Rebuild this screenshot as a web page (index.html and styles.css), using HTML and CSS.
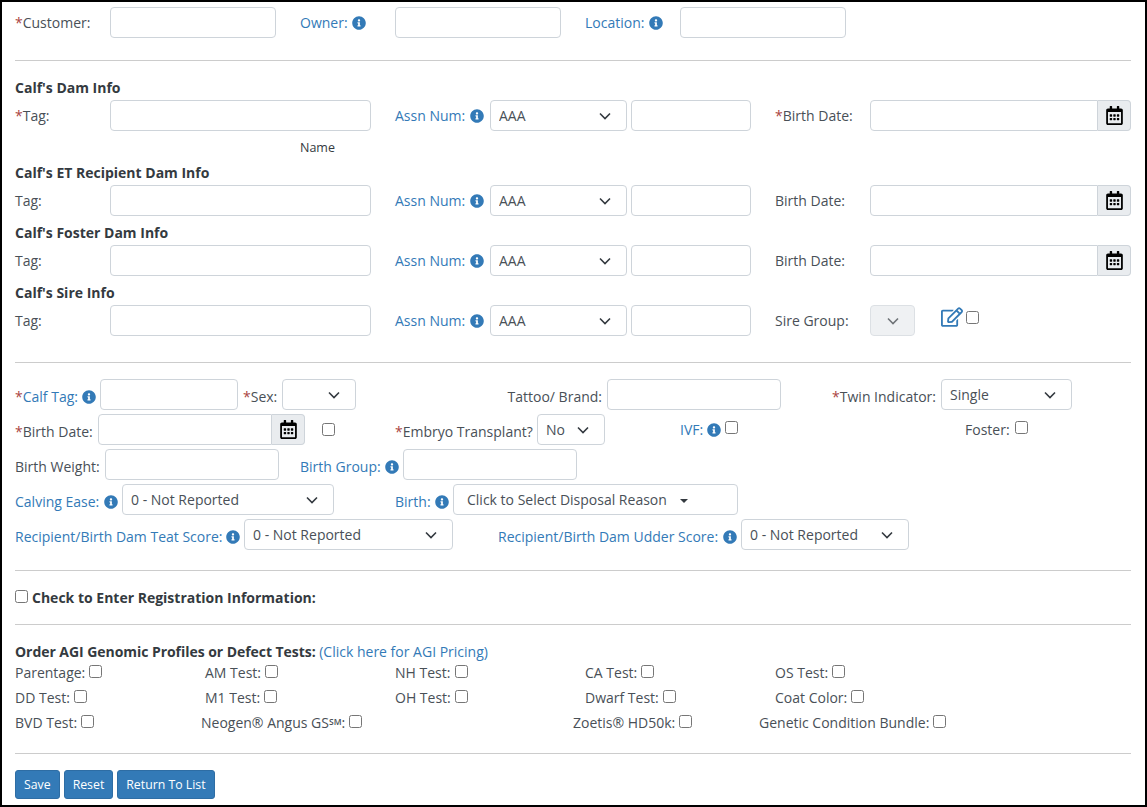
FILE: index.html

```html
<!DOCTYPE html>
<html lang="en">
<head>
    <meta charset="UTF-8">
    <title>Calf Registration</title>
    <link rel="stylesheet" href="styles.css">
</head>
<body>
    <svg class="sprites" xmlns="http://www.w3.org/2000/svg">
        <symbol id="info" viewBox="0 0 512 512"><path d="M256 8C119.043 8 8 119.083 8 256c0 136.997 111.043 248 248 248s248-111.003 248-248C504 119.083 392.957 8 256 8zm0 110c23.196 0 42 18.804 42 42s-18.804 42-42 42-42-18.804-42-42 18.804-42 42-42zm56 254c0 6.627-5.373 12-12 12h-88c-6.627 0-12-5.373-12-12v-24c0-6.627 5.373-12 12-12h12v-64h-12c-6.627 0-12-5.373-12-12v-24c0-6.627 5.373-12 12-12h64c6.627 0 12 5.373 12 12v100h12c6.627 0 12 5.373 12 12v24z"/></symbol>
        <symbol id="cal" viewBox="0 0 448 512"><path d="M148 288h-40c-6.6 0-12-5.4-12-12v-40c0-6.6 5.4-12 12-12h40c6.6 0 12 5.4 12 12v40c0 6.6-5.4 12-12 12zm108-12v-40c0-6.6-5.4-12-12-12h-40c-6.6 0-12 5.4-12 12v40c0 6.6 5.4 12 12 12h40c6.6 0 12-5.4 12-12zm96 0v-40c0-6.6-5.4-12-12-12h-40c-6.6 0-12 5.4-12 12v40c0 6.6 5.4 12 12 12h40c6.6 0 12-5.4 12-12zm-96 96v-40c0-6.6-5.4-12-12-12h-40c-6.6 0-12 5.4-12 12v40c0 6.6 5.4 12 12 12h40c6.6 0 12-5.4 12-12zm-96 0v-40c0-6.6-5.4-12-12-12h-40c-6.6 0-12 5.4-12 12v40c0 6.6 5.4 12 12 12h40c6.6 0 12-5.4 12-12zm192 0v-40c0-6.6-5.4-12-12-12h-40c-6.6 0-12 5.4-12 12v40c0 6.6 5.4 12 12 12h40c6.6 0 12-5.4 12-12zm96-260v352c0 26.5-21.5 48-48 48H48c-26.5 0-48-21.5-48-48V112c0-26.5 21.5-48 48-48h48V12c0-6.6 5.4-12 12-12h40c6.6 0 12 5.4 12 12v52h128V12c0-6.6 5.4-12 12-12h40c6.6 0 12 5.4 12 12v52h48c26.5 0 48 21.5 48 48zm-48 346V160H48v298c0 3.3 2.7 6 6 6h340c3.3 0 6-2.7 6-6z"/></symbol>
        <symbol id="edit" viewBox="0 0 576 512"><path d="M402.3 344.9l32-32c5-5 13.7-1.5 13.7 5.7V464c0 26.5-21.5 48-48 48H48c-26.5 0-48-21.5-48-48V112c0-26.5 21.5-48 48-48h273.5c7.1 0 10.7 8.6 5.7 13.7l-32 32c-1.5 1.5-3.5 2.3-5.7 2.3H48v352h352V350.5c0-2.1.8-4.1 2.3-5.6zm156.6-201.8L296.3 405.7l-90.4 10c-26.2 2.9-48.5-19.2-45.6-45.6l10-90.4L432.9 17.1c22.9-22.9 59.9-22.9 82.7 0l43.2 43.2c22.9 22.9 22.9 60 .1 82.8zM460.1 174L402 115.9 216.2 301.8l-7.3 65.3 65.3-7.3L460.1 174zm64.8-79.7l-43.2-43.2c-4.1-4.1-10.8-4.1-14.8 0L436 82l58.1 58.1 30.9-30.9c4-4.2 4-10.8-.1-14.9z"/></symbol>
    </svg>

    <form class="frame">
        <div class="row row-owner">
            <label><span class="req">*</span>Customer:</label>
            <input type="text">
            <label class="pad-l link">Owner: <svg class="info"><use href="#info"/></svg></label>
            <input type="text">
            <label class="pad-l link">Location: <svg class="info"><use href="#info"/></svg></label>
            <input type="text">
        </div>
        <hr class="hr-owner">

        <h4 class="dam-title first">Calf's Dam Info</h4>
        <div class="row row-dam">
            <label><span class="req">*</span>Tag:</label>
            <input type="text">
            <label class="pad-l link">Assn Num: <svg class="info"><use href="#info"/></svg></label>
            <select><option>AAA</option></select>
            <input class="gap-l" type="text">
            <label class="pad-l"><span class="req">*</span>Birth Date:</label>
            <div class="date"><input type="text"><span class="addon"><svg class="cal"><use href="#cal"/></svg></span></div>
        </div>
        <div class="name-note">Name</div>

        <h4 class="dam-title">Calf's ET Recipient Dam Info</h4>
        <div class="row row-dam">
            <label>Tag:</label>
            <input type="text">
            <label class="pad-l link">Assn Num: <svg class="info"><use href="#info"/></svg></label>
            <select><option>AAA</option></select>
            <input class="gap-l" type="text">
            <label class="pad-l">Birth Date:</label>
            <div class="date"><input type="text"><span class="addon"><svg class="cal"><use href="#cal"/></svg></span></div>
        </div>

        <h4 class="dam-title">Calf's Foster Dam Info</h4>
        <div class="row row-dam">
            <label>Tag:</label>
            <input type="text">
            <label class="pad-l link">Assn Num: <svg class="info"><use href="#info"/></svg></label>
            <select><option>AAA</option></select>
            <input class="gap-l" type="text">
            <label class="pad-l">Birth Date:</label>
            <div class="date"><input type="text"><span class="addon"><svg class="cal"><use href="#cal"/></svg></span></div>
        </div>

        <h4 class="dam-title">Calf's Sire Info</h4>
        <div class="row row-sire">
            <label>Tag:</label>
            <input type="text">
            <label class="pad-l link">Assn Num: <svg class="info"><use href="#info"/></svg></label>
            <select><option>AAA</option></select>
            <input class="gap-l" type="text">
            <label class="pad-l">Sire Group:</label>
            <select class="locked" disabled></select>
            <div class="sire-tools"><svg class="edit"><use href="#edit"/></svg><input type="checkbox"></div>
        </div>
        <hr class="hr-sire">

        <div class="calf-rows">
            <div class="row row-calf">
                <label class="link"><span class="req">*</span>Calf Tag: <svg class="info tight"><use href="#info"/></svg></label>
                <input type="text">
                <label class="pad-sex"><span class="req">*</span>Sex:</label>
                <select></select>
                <label class="to-right">Tattoo/ Brand:</label>
                <input type="text">
                <label class="to-right"><span class="req">*</span>Twin Indicator:</label>
                <select><option>Single</option></select>
            </div>
            <div class="row row-birth">
                <label><span class="req">*</span>Birth Date:</label>
                <div class="date"><input type="text"><span class="addon"><svg class="cal"><use href="#cal"/></svg></span></div>
                <div class="birth-check"><input type="checkbox"></div>
                <label><span class="req">*</span>Embryo Transplant?</label>
                <select><option>No</option></select>
                <span></span>
                <label class="link no-drop">IVF: <svg class="info tight"><use href="#info"/></svg> <input type="checkbox"></label>
                <label class="no-drop foster">Foster: <input type="checkbox"></label>
            </div>
            <div class="row row-weight">
                <label>Birth Weight:</label>
                <input type="text">
                <label class="pad-l link">Birth Group: <svg class="info"><use href="#info"/></svg></label>
                <input type="text">
            </div>
            <div class="row row-ease">
                <label class="link">Calving Ease: <svg class="info"><use href="#info"/></svg></label>
                <select><option>0 - Not Reported</option></select>
                <label class="pad-birth link">Birth: <svg class="info"><use href="#info"/></svg></label>
                <button class="disposal" type="button">Click to Select Disposal Reason<span class="caret"></span></button>
            </div>
            <div class="row row-score">
                <label class="link">Recipient/Birth Dam Teat Score: <svg class="info tight"><use href="#info"/></svg></label>
                <select><option>0 - Not Reported</option></select>
                <label class="pad-udder link">Recipient/Birth Dam Udder Score: <svg class="info"><use href="#info"/></svg></label>
                <select><option>0 - Not Reported</option></select>
            </div>
        </div>
        <hr class="hr-score">

        <label class="reg-check"><input type="checkbox">Check to Enter Registration Information:</label>
        <hr class="hr-reg">

        <div class="agi-title"><b>Order AGI Genomic Profiles or Defect Tests:</b> <a href="#">(Click here for AGI Pricing)</a></div>
        <div class="tests">
            <label>Parentage: <input type="checkbox"></label>
            <label>AM Test: <input type="checkbox"></label>
            <label>NH Test: <input type="checkbox"></label>
            <label>CA Test: <input type="checkbox"></label>
            <label>OS Test: <input type="checkbox"></label>
            <label>DD Test: <input type="checkbox"></label>
            <label>M1 Test: <input type="checkbox"></label>
            <label>OH Test: <input type="checkbox"></label>
            <label>Dwarf Test: <input type="checkbox"></label>
            <label>Coat Color: <input type="checkbox"></label>
            <label>BVD Test: <input type="checkbox"></label>
            <label class="neogen">Neogen® Angus GS<sup>SM</sup>: <input type="checkbox"></label>
            <span></span>
            <label class="zoetis">Zoetis® HD50k: <input type="checkbox"></label>
            <label class="bundle">Genetic Condition Bundle: <input type="checkbox"></label>
        </div>
        <hr class="hr-tests">

        <div class="actions">
            <button type="button">Save</button>
            <button type="button">Reset</button>
            <button type="button">Return To List</button>
        </div>
    </form>
</body>
</html>
```

FILE: styles.css

```css
* {
    box-sizing: border-box;
}
html, body {
    margin: 0;
    padding: 0;
}
body {
    font-family: "Open Sans", sans-serif;
    font-size: 14px;
    color: #495057;
    background-color: #fff;
}
.sprites {
    display: none;
}
.frame {
    width: 1147px;
    height: 807px;
    border: 2px solid #000;
    padding: 5px 14px 0 13px;
    overflow: hidden;
}
hr {
    border: none;
    border-top: 1px solid #ccc;
    margin: 0;
}
.row {
    display: grid;
    align-items: center;
    height: 31px;
}
.row label {
    white-space: nowrap;
}
input[type="text"], select {
    height: 31px;
    width: 100%;
    border: 1px solid #ced4da;
    border-radius: 4px;
    background-color: #fff;
    font-family: inherit;
    font-size: 14px;
    color: #495057;
    padding: 0 8px;
}
select {
    appearance: none;
    background-image: url("data:image/svg+xml,%3Csvg xmlns='http://www.w3.org/2000/svg' width='12' height='8' viewBox='0 0 12 8'%3E%3Cpath fill='none' stroke='%23343a40' stroke-width='1.6' d='M1 1.5l5 5 5-5'/%3E%3C/svg%3E");
    background-repeat: no-repeat;
    background-position: right 15px center;
}
input[type="checkbox"] {
    width: 13px;
    height: 13px;
    margin: 0 0 0 1px;
    vertical-align: 1px;
}
.req {
    color: #a94442;
}
.link {
    color: #337ab7;
}
.info {
    width: 14px;
    height: 14px;
    fill: #337ab7;
    vertical-align: -2px;
    margin-left: 1px;
}
.info.tight {
    margin-left: 0;
}
.pad-l {
    padding-left: 24px;
}

/* top rows */
.row-owner {
    grid-template-columns: 95px 166px 119px 166px 119px 166px;
}
.hr-owner {
    margin-top: 22px;
}
.dam-title {
    font-size: 14px;
    font-weight: 700;
    color: #343a40;
    height: 23px;
    line-height: 22px;
    margin: 6px 0 0;
}
.dam-title.first {
    margin-top: 16px;
}
.row-dam {
    grid-template-columns: 95px 261px 119px 137px 124px 119px 261px;
}
.row-sire {
    grid-template-columns: 95px 261px 119px 137px 124px 119px 45px auto;
    justify-content: start;
}
.gap-l {
    margin-left: 4px;
    width: 120px !important;
}
.name-note {
    height: 25px;
    line-height: 34px;
    font-size: 12.5px;
    padding-left: 285px;
    color: #343a40;
}
.date {
    display: flex;
}
.date input[type="text"] {
    flex: 1;
    min-width: 0;
    border-radius: 4px 0 0 4px;
}
.addon {
    width: 33px;
    height: 31px;
    flex: none;
    display: flex;
    align-items: center;
    justify-content: center;
    background-color: #e9ecef;
    border: 1px solid #ced4da;
    border-left: none;
    border-radius: 0 4px 4px 0;
}
.cal {
    width: 17px;
    height: 19px;
    fill: #000;
}
.locked {
    background-color: #e9ecef;
}
.sire-tools {
    display: flex;
    align-items: center;
    margin: -7px 0 0 26px;
    gap: 3px;
}
.sire-tools input {
    margin: 0;
}
.edit {
    width: 22px;
    height: 20px;
    fill: #337ab7;
}
.hr-sire {
    margin-top: 26px;
}

/* calf rows */
.calf-rows {
    display: flex;
    flex-direction: column;
    gap: 4px;
    margin-top: 16px;
}
.calf-rows label {
    padding-top: 4px;
}
.calf-rows label.no-drop {
    padding-top: 0;
}
.row-calf {
    grid-template-columns: 85px 138px 44px 74px 251px 174px 160px 131px;
    justify-content: start;
}
.pad-sex {
    padding-left: 5px;
}
.to-right {
    text-align: right;
    padding-right: 5px;
}
.row-birth {
    grid-template-columns: 83px 207px 90px 142px 68px 75px 285px auto;
    justify-content: start;
}
.foster input {
    margin-left: 2px;
}
.birth-check {
    padding: 4px 0 0 16px;
}
.row-weight {
    grid-template-columns: 90px 174px 124px 174px;
    justify-content: start;
}
.row-weight .pad-l {
    padding-left: 21px;
}
.row-ease {
    grid-template-columns: 107px 212px 119px 285px;
    justify-content: start;
}
.calf-rows .pad-birth {
    padding-left: 61px;
}
.row-score {
    grid-template-columns: 229px 209px 288px 168px;
    justify-content: start;
}
.pad-udder {
    padding-left: 45px;
}
.disposal {
    height: 31px;
    border: 1px solid #ced4da;
    border-radius: 4px;
    background-color: #fff;
    font-family: inherit;
    font-size: 14px;
    color: #495057;
    text-align: left;
    padding: 0 0 0 13px;
}
.caret {
    display: inline-block;
    margin-left: 13px;
    vertical-align: 2px;
    border-top: 4px solid #343a40;
    border-left: 4px solid transparent;
    border-right: 4px solid transparent;
}
.hr-score {
    margin-top: 20px;
}
.reg-check {
    display: block;
    font-weight: 700;
    color: #343a40;
    height: 22px;
    line-height: 22px;
    margin-top: 16px;
}
.reg-check input {
    margin: 0 4px 0 0;
    vertical-align: 0;
}
.hr-reg {
    margin-top: 15px;
}
.agi-title {
    height: 22px;
    line-height: 22px;
    margin-top: 16px;
    color: #343a40;
}
.agi-title b {
    letter-spacing: -0.05px;
}
.agi-title a {
    color: #337ab7;
    text-decoration: none;
}

/* test checkboxes */
.tests {
    display: grid;
    grid-template-columns: repeat(5, 190px);
    grid-auto-rows: 25px;
    line-height: 25px;
    margin-top: -3px;
}
.tests label {
    white-space: nowrap;
}
.tests input {
    margin-left: 0.5px;
    vertical-align: 0;
}
.tests sup {
    font-size: 8.5px;
    font-weight: 600;
    line-height: 0;
    vertical-align: 3px;
}
.neogen {
    margin-left: -4px;
}
.zoetis {
    margin-left: -12px;
}
.bundle {
    margin-left: -16px;
}
.hr-tests {
    margin-top: 18px;
}
.actions {
    display: flex;
    gap: 4px;
    margin-top: 16px;
}
.actions button {
    height: 29px;
    padding: 0 8px 1px;
    border: 1px solid #2e6da4;
    border-radius: 3px;
    background-color: #337ab7;
    color: #fff;
    font-family: inherit;
    font-size: 12.3px;
}
```
